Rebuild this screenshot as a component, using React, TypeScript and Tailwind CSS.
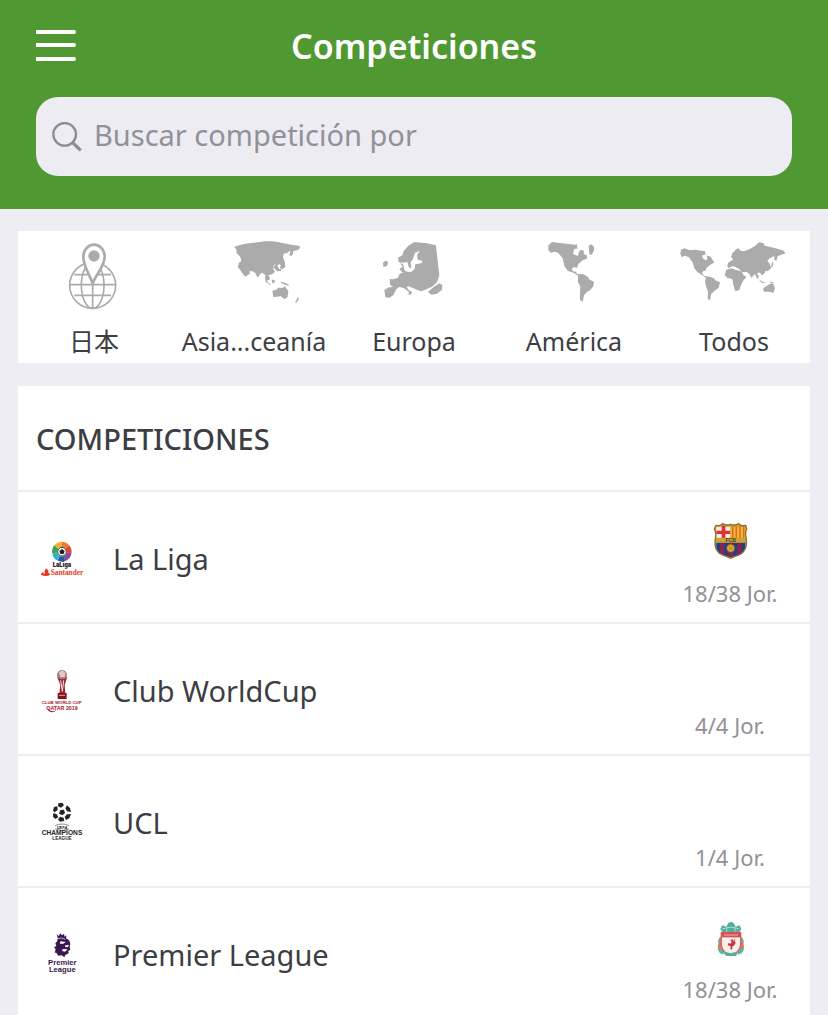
import React from 'react';

const GlobePinIcon: React.FC = () => (
  <svg viewBox="0 0 270 240" className="w-[90px] h-20 shrink-0" fill="none" stroke="#ababab" strokeWidth="5">
    <circle cx="131" cy="160" r="69" />
    <ellipse cx="131" cy="160" rx="34" ry="69" />
    <path d="M131 91v138M62 158h138M76 128h110M76 190h110" />
    <path
      d="M131 154C121 126 103 102 103 74a30 34 0 0 1 64 0C167 102 142 126 131 154Z"
      fill="#fff"
      strokeWidth="8"
    />
    <circle cx="135" cy="72" r="17" fill="#ababab" stroke="none" />
  </svg>
);

const AsiaIcon: React.FC = () => (
  <svg viewBox="-63 0 330 240" className="w-[110px] h-20 shrink-0" fill="#ababab">
    <path d="M43 44C68 35 90 33 112 31C135 26 165 26 187 33L215 38L238 42Q242 49 235 53L220 58L219 66L213 73L208 69L212 55L203 62L191 65L189 76L194 88L196 104L189 111L179 107L183 101L177 96L172 101L177 110L182 112L181 104L185 109L183 117L172 118L164 110L161 104L168 97L161 99L160 112L165 119L156 127L145 130L150 138L147 145L141 145L144 153L154 157L150 158L138 151L135 139L136 129L128 123L122 124L113 137L106 123L96 117L86 119L91 124L76 134L68 125L60 113L54 106L56 94L64 86L61 75L50 64L49 53Z" />
    <path d="M155 143L163 143L165 151L157 154ZM182 149L196 153L208 159L204 161L184 154ZM157 177L171 172L174 167L190 167L194 162L205 177L203 195L194 202L182 193L160 196ZM233 196L237 198L231 211L225 213Z" />
  </svg>
);

const EuropeIcon: React.FC = () => (
  <svg viewBox="0 0 270 240" className="w-[90px] h-20 shrink-0" fill="#ababab">
    <path d="M136 30L173 34L201 40L207 95L211 130L204 151L189 164L172 172L157 178L145 174L119 163L113 164L118 173L130 181L123 190L118 186L120 180L104 168L91 165L82 171L73 190L60 198L49 195L46 174L60 166L72 165L63 158L62 141L73 142L87 137L92 125L102 122L91 112L101 104L93 93L102 96L107 116L117 120L128 119L137 110L139 97L159 93L160 86L146 83L144 70L152 57L138 62L131 83L125 90L127 107L120 107L115 90L103 92L89 91L87 77L100 70L104 57L118 41Z" />
    <path d="M49 86L57 89L55 101L43 105L42 92ZM177 180L194 165L211 154L220 159L219 173L204 185L187 188Z" />
  </svg>
);

const AmericaIcon: React.FC = () => (
  <svg viewBox="0 0 270 240" className="w-[90px] h-20 shrink-0" fill="#ababab">
    <path d="M58 40L69 30L99 34L138 38L144 37L145 50L136 50L132 66L147 72L149 61L156 53L164 56L165 67L173 69L174 80L162 84L148 96L144 108L134 105L128 112L132 118L141 119L144 126L163 127L176 134L182 143L195 149L193 163L183 175L174 180L165 190L161 209L153 204V182L154 163L147 151L147 131L135 123L116 116L106 102L101 79L88 63L77 59L65 62L58 54Z" />
    <path d="M179 41L187 37L195 44L195 55L188 69L181 66Z" />
  </svg>
);

const WorldIcon: React.FC = () => (
  <svg viewBox="0 0 390 240" className="w-[130px] h-20 shrink-0" fill="#ababab">
    <path d="M36 53L46 49L62 55L78 53L108 58L110 68L100 70L101 78L110 85L115 82L113 70L125 74L131 84L136 92L126 97L112 108L110 116L103 117L99 122L105 131L122 134L135 139L139 145L153 151L149 167L135 178L126 187L123 206L116 199L117 180L111 162L108 148L111 137L99 129L84 119L76 109L71 91L59 75L47 71L38 76L34 65Z" />
    <path d="M175 105L177 93L185 87L193 83L186 75L190 64L202 52L208 49L215 56L225 58L241 52L257 43L270 31L283 33L287 41L305 45L325 50L344 56L350 64L335 69L326 73L322 87L316 83L316 72L302 79L295 87L303 96L305 110L295 118L289 116L287 124L278 130L273 122L264 123L270 134L265 142L258 126L247 137L239 124L233 120L219 121L212 112L195 103L185 104L179 109Z" />
    <path d="M172 113L188 109L201 114L216 117L225 131L233 134L222 147L216 160L211 174L199 178L193 158L190 141L174 137L167 129ZM268 141L281 149L293 151L279 153ZM302 148L316 152L306 154ZM283 168L301 157L312 154L318 169L313 182L300 179L284 179Z" />
    <path d="M303 110L312 101L313 91L309 91L307 102L299 108Z" />
  </svg>
);

const LaLigaLogo: React.FC = () => (
  <svg viewBox="0 0 210 165" className="w-[70px] h-[55px] shrink-0">
    <g fill="none" strokeWidth="15">
      <path d="M79 48A22 22 0 0 1 95 40" stroke="#f6b52b" />
      <path d="M95 40A22 22 0 0 1 111 47" stroke="#ef7d2d" />
      <path d="M111 47A22 22 0 0 1 117 66" stroke="#e84533" />
      <path d="M117 66A22 22 0 0 1 104 83" stroke="#8a4d9e" />
      <path d="M104 83A22 22 0 0 1 86 82" stroke="#2855a5" />
      <path d="M86 82A22 22 0 0 1 74 66" stroke="#2cb3cf" />
      <path d="M74 66A22 22 0 0 1 79 48" stroke="#40a24c" />
    </g>
    <circle cx="96" cy="62" r="13" fill="#fff" stroke="#333" strokeWidth="3" />
    <path d="M96 54L104 60L101 69H91L88 60Z" fill="#222" />
    <text x="96" y="109" textAnchor="middle" fontFamily="Inter, sans-serif" fontWeight="900" fontSize="17" fill="#222">
      LaLiga
    </text>
    <path d="M47 112C55 117 58 120 54 125C67 130 57 135 46 135C33 135 27 128 40 124C40 129 45 129 46 128C40 122 47 119 47 112Z" fill="#e73827" />
    <text x="62" y="132" fontFamily="Liberation Serif, serif" fontWeight="700" fontSize="22" fill="#e73827">
      Santander
    </text>
  </svg>
);

const ClubWorldCupLogo: React.FC = () => (
  <svg viewBox="0 0 210 180" className="w-[70px] h-[60px] shrink-0">
    <circle cx="96" cy="42" r="15" fill="#a67c80" />
    <path d="M87 34L97 28L106 35L104 48L91 49Z" fill="#dfc9ca" />
    <path d="M81 47Q96 62 112 47L104 72L106 97H88L91 72Z" fill="#9f2633" />
    <path d="M92 58L97 91L101 58" fill="none" stroke="#f6e5e5" strokeWidth="3" />
    <path d="M83 96H110V114H83Z" fill="#87101e" />
    <path d="M87 103H105" stroke="#d7a3a8" strokeWidth="3" />
    <g fontFamily="Liberation Sans, sans-serif" fontWeight="700" fill="#9e1729" textAnchor="middle">
      <text x="95" y="130" fontSize="13">CLUB WORLD CUP</text>
      <text x="96" y="146" fontSize="16">QATAR 2019</text>
    </g>
    <path d="M52 141C61 153 72 153 80 147C70 158 56 155 52 141Z" fill="#9e1729" />
  </svg>
);

const ChampionsLogo: React.FC = () => (
  <svg viewBox="0 0 210 165" className="w-[70px] h-[55px] shrink-0" fill="#242424">
    <path d="M85 25L97 23L102 31L93 38L84 34ZM111 31L120 39L123 51L111 49L106 40ZM111 58L123 57L118 70L108 75L104 66ZM90 65L101 68L103 78L90 80L84 73ZM70 55L80 57L85 67L76 72L69 65ZM72 36L82 34L83 45L74 52L69 47ZM91 45L102 44L105 54L97 61L87 56Z" />
    <path d="M75 92Q96 82 117 92M75 102Q96 111 117 102" fill="none" stroke="#555" strokeWidth="2" />
    <g fontFamily="Liberation Sans, sans-serif" fontWeight="700" textAnchor="middle">
      <text x="96" y="102" fontSize="12" fontStyle="italic">UEFA</text>
      <text x="96" y="121" fontSize="20">CHAMPIONS</text>
      <text x="96" y="136" fontSize="14">LEAGUE</text>
    </g>
  </svg>
);

const PremierLogo: React.FC = () => (
  <svg viewBox="0 0 210 180" className="w-[70px] h-[60px] shrink-0" fill="#3b174f">
    <path d="M80 27L86 33L91 25L96 31L102 26L104 35L110 31L108 40C120 45 123 56 119 65L121 75L115 77L116 85L106 90L103 97L95 91L85 92L79 83L74 83L77 73L72 67L79 63L76 55L82 48L83 39Z" />
    <path d="M91 49L107 51L100 56L90 56ZM106 61L117 60L113 67L105 65ZM98 72L113 73L105 80L96 78Z" fill="#fff" />
    <path d="M82 41Q95 36 106 43" fill="none" stroke="#fff" strokeWidth="2" />
    <g fontFamily="Liberation Sans, sans-serif" fontWeight="700" fontSize="23" textAnchor="middle">
      <text x="97" y="121">Premier</text>
      <text x="97" y="142">League</text>
    </g>
  </svg>
);

const BarcelonaCrest: React.FC = () => (
  <svg viewBox="0 0 180 165" className="w-[60px] h-[55px] shrink-0">
    <defs>
      <clipPath id="barcelona-shield">
        <path d="M48 34Q62 38 68 29Q81 36 92 31Q104 36 116 29Q122 38 137 34L140 45Q134 57 139 74C142 101 132 120 108 126L92 133L76 126C52 120 42 101 46 74Q50 57 43 45Z" />
      </clipPath>
    </defs>
    <g clipPath="url(#barcelona-shield)">
      <path d="M40 25H145V140H40Z" fill="#c3a22e" />
      <path d="M49 38H91V73H49Z" fill="#f7eee4" />
      <path d="M65 35H76V73H65ZM49 50H91V60H49Z" fill="#df3038" />
      <path d="M92 38H137V73H92Z" fill="#f2bd31" />
      <path d="M98 37V73M109 37V73M120 37V73M131 37V73" stroke="#e36b28" strokeWidth="5" />
      <path d="M49 85H136V126H49Z" fill="#263c89" />
      <path d="M61 85H73V129H61ZM85 85H99V129H85ZM112 85H124V129H112Z" fill="#8c2450" />
      <path d="M44 71H140V86H44Z" fill="#c9a536" />
    </g>
    <path d="M48 34Q62 38 68 29Q81 36 92 31Q104 36 116 29Q122 38 137 34L140 45Q134 57 139 74C142 101 132 120 108 126L92 133L76 126C52 120 42 101 46 74Q50 57 43 45Z" fill="none" stroke="#8c7131" strokeWidth="4" />
    <circle cx="92" cy="103" r="12" fill="#dfad28" stroke="#7d4e30" strokeWidth="2" />
    <path d="M85 97L99 109M99 97L85 109" stroke="#996b2c" strokeWidth="2" />
    <text x="92" y="84" textAnchor="middle" fontFamily="Liberation Sans, sans-serif" fontWeight="700" fontSize="15" fill="#423c27">
      FCB
    </text>
  </svg>
);

const LiverpoolCrest: React.FC = () => (
  <svg viewBox="0 0 180 165" className="w-[60px] h-[55px] shrink-0">
    <path d="M61 57L67 46L79 50L85 39L93 35L101 39L107 50L119 46L124 57L117 69H69Z" fill="#55ad9f" />
    <path d="M67 57Q92 47 118 57M80 50V65M105 50V65" fill="none" stroke="#a9d8ce" strokeWidth="3" />
    <path d="M61 80Q51 91 56 102Q49 116 60 130L71 134V80ZM124 80Q135 91 130 102Q136 116 125 130L114 134V80Z" fill="#64b1a2" />
    <path d="M57 93L64 99L63 117L54 111ZM127 93L132 111L124 117L121 99Z" fill="#ee754e" />
    <path d="M64 68H122V106Q118 128 93 137Q67 128 64 106Z" fill="#f8eeeb" stroke="#df605e" strokeWidth="4" />
    <path d="M64 68H122V82H64Z" fill="#d74c4f" />
    <path d="M72 75H114" stroke="#f1b2ab" strokeWidth="3" />
    <path d="M106 85L104 94L107 99L102 107L98 109L95 120L91 117L92 109L83 106L85 99L92 101L95 96L91 91L98 87L100 94Z" fill="#c9373f" />
    <path d="M68 124L92 130L117 124L108 138H78Z" fill="#55ad9f" />
  </svg>
);

const regions = [
  { name: '日本', icon: <GlobePinIcon /> },
  { name: 'Asia...ceanía', icon: <AsiaIcon /> },
  { name: 'Europa', icon: <EuropeIcon /> },
  { name: 'América', icon: <AmericaIcon /> },
  { name: 'Todos', icon: <WorldIcon /> }
];

const competitions = [
  { name: 'La Liga', logo: <LaLigaLogo />, crest: <BarcelonaCrest />, round: '18/38 Jor.' },
  { name: 'Club WorldCup', logo: <ClubWorldCupLogo />, crest: null, round: '4/4 Jor.' },
  { name: 'UCL', logo: <ChampionsLogo />, crest: null, round: '1/4 Jor.' },
  { name: 'Premier League', logo: <PremierLogo />, crest: <LiverpoolCrest />, round: '18/38 Jor.' }
];

const App: React.FC = () => {
  return (
    <div className="min-h-screen bg-[#eeedf3] text-[#3d3d44] font-['Noto_Sans','Noto_Sans_CJK_JP',sans-serif]">
      <header className="bg-[#509832] px-9 pb-[33px]">
        <div className="grid grid-cols-[1fr_auto_1fr] items-center h-[97px] pb-[6px]">
          <button type="button" aria-label="Menú" className="w-10 h-8">
            <svg viewBox="0 0 40 32" className="w-10 h-8" fill="#fff">
              <path d="M0 0H38Q40 0 40 2T38 4H0ZM0 13H38Q40 13 40 15T38 17H0ZM0 27H38Q40 27 40 29T38 31H0Z" />
            </svg>
          </button>
          <h1 className="text-white text-[34px] leading-10 font-semibold">Competiciones</h1>
        </div>
        <label className="flex items-center gap-3 h-[79px] px-4 rounded-[22px] bg-[#edecf2]">
          <svg viewBox="0 0 90 90" className="w-[30px] h-[30px] shrink-0" fill="none" stroke="#8c8c92">
            <circle cx="38" cy="37" r="34" strokeWidth="7" />
            <path d="M62 62L86 85" strokeWidth="10" />
          </svg>
          <input
            type="text"
            aria-label="Buscar competición"
            placeholder="Buscar competición por"
            className="flex-1 min-w-0 pb-1 bg-transparent outline-none text-[29px] placeholder:text-[#919196]"
          />
        </label>
      </header>

      <main className="px-[18px] pt-[22px]">
        <nav className="bg-white h-[132px] pt-px">
          <div className="grid grid-cols-5 -mx-1">
            {regions.map((region) => (
              <button key={region.name} type="button" className="flex flex-col items-center">
                {region.icon}
                <span className="text-[25px] leading-[58px] whitespace-nowrap">{region.name}</span>
              </button>
            ))}
          </div>
        </nav>

        <section className="bg-white mt-[23px]">
          <h2 className="flex items-center h-[104px] pt-[2px] px-[18px] text-[29px] font-medium">COMPETICIONES</h2>
          <ul>
            {competitions.map((item) => (
              <li key={item.name} className="flex items-center h-[132px] pt-[3px] border-t-2 border-[#ededf0] pl-3 pr-5">
                {item.logo}
                <span className="flex-1 ml-[13px] text-[29px]">{item.name}</span>
                <div className="flex flex-col items-center w-[120px] pt-[6px]">
                  <div className="h-[55px]">{item.crest}</div>
                  <span className="mt-2 text-[22px] leading-8 text-[#919197]">{item.round}</span>
                </div>
              </li>
            ))}
          </ul>
        </section>
      </main>
    </div>
  );
};

export default App;
